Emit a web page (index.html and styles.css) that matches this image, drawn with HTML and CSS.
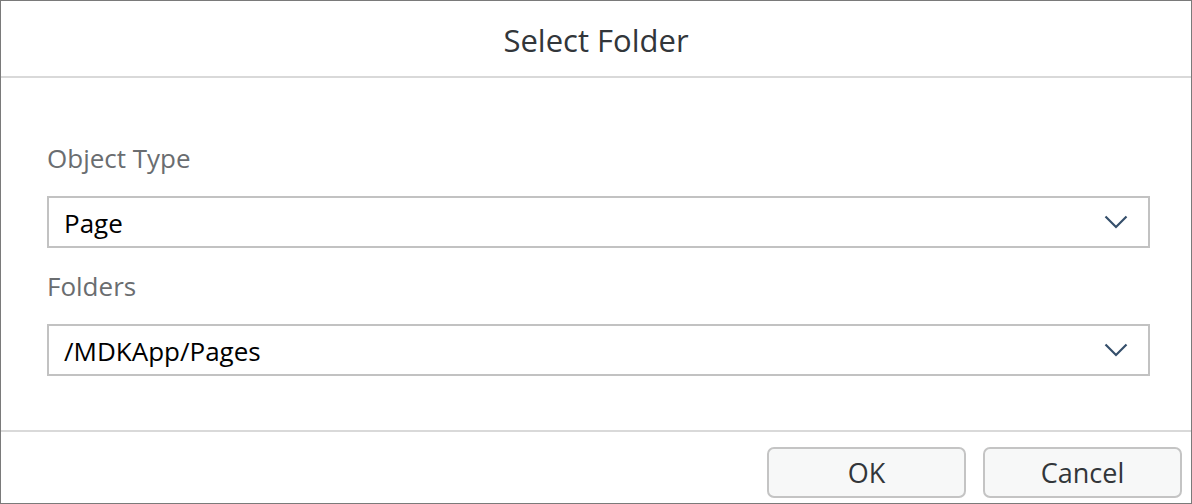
FILE: index.html
```html
<!DOCTYPE html>
<html>
<head>
<meta charset="utf-8">
<link rel="stylesheet" href="styles.css">
</head>
<body>
<div class="dialog">
  <header class="dialog-header">
    <h1 class="dialog-title">Select Folder</h1>
  </header>
  <main class="dialog-body">
    <label class="field-label">Object Type</label>
    <div class="select">
      <span class="select-value">Page</span>
      <svg class="chevron" width="24" height="14" viewBox="0 0 24 14"><polyline points="1.5,1.5 12,12 22.5,1.5" fill="none" stroke="#354f6b" stroke-width="2.2"/></svg>
    </div>
    <label class="field-label second">Folders</label>
    <div class="select">
      <span class="select-value">/MDKApp/Pages</span>
      <svg class="chevron" width="24" height="14" viewBox="0 0 24 14"><polyline points="1.5,1.5 12,12 22.5,1.5" fill="none" stroke="#354f6b" stroke-width="2.2"/></svg>
    </div>
  </main>
  <footer class="dialog-footer">
    <button class="btn">OK</button>
    <button class="btn">Cancel</button>
  </footer>
</div>
</body>
</html>
```
FILE: styles.css
```css
html, body {
  margin: 0;
  padding: 0;
  background: #ffffff;
}
body {
  font-family: "Open Sans", "Noto Sans", sans-serif;
  color: #32363a;
}
.dialog {
  box-sizing: border-box;
  width: 1192px;
  height: 504px;
  border: 1px solid #7a7a7a;
  display: flex;
  flex-direction: column;
  background: #ffffff;
}
.dialog-header {
  flex: none;
  height: 75px;
  border-bottom: 2px solid #d9d9d9;
  display: flex;
  align-items: center;
  justify-content: center;
}
.dialog-title {
  margin: 0;
  font-size: 31px;
  font-weight: 400;
  line-height: 36px;
  color: #32363a;
  padding-top: 2px;
}
.dialog-body {
  flex: none;
  height: 354px;
  box-sizing: border-box;
  padding: 65px 41px 0 46px;
  border-bottom: 2px solid #d9d9d9;
}
.field-label {
  display: block;
  font-size: 26px;
  line-height: 30px;
  color: #6a6d70;
  margin-bottom: 23px;
}
.field-label.second {
  margin-top: 23px;
}
.select {
  box-sizing: border-box;
  height: 52px;
  border: 2px solid #c2c2c2;
  display: flex;
  align-items: center;
  justify-content: space-between;
  padding: 0 20px 0 15px;
  background: #ffffff;
}
.select-value {
  font-size: 26px;
  line-height: 30px;
  color: #000000;
  padding-top: 1px;
}
.chevron {
  display: block;
}
.dialog-footer {
  flex: 1;
  display: flex;
  justify-content: flex-end;
  align-items: flex-start;
  gap: 17px;
  padding: 15px 9px 0 0;
}
.btn {
  box-sizing: border-box;
  width: 199px;
  height: 51px;
  border: 2px solid #c4c4c4;
  border-radius: 7px;
  background: #f7f8f8;
  font-family: "Open Sans", "Noto Sans", sans-serif;
  font-size: 27px;
  color: #32363a;
  padding: 0;
}
```
